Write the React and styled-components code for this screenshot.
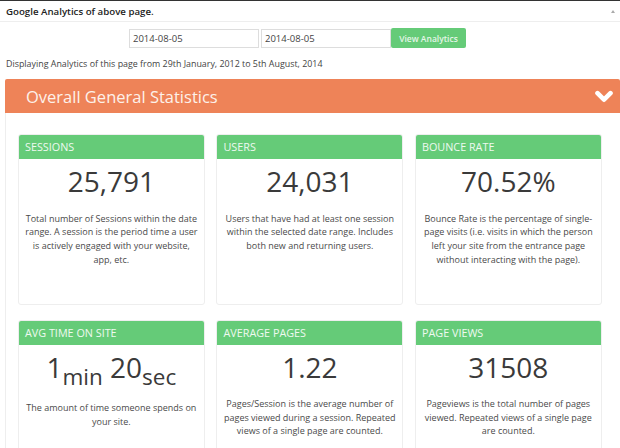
import React from "react";
import styled, { createGlobalStyle } from "styled-components";

const GlobalStyle = createGlobalStyle`
  html, body {
    margin: 0;
    padding: 0;
    width: 620px;
    height: 448px;
    overflow: hidden;
    background: #fff;
    font-family: "Open Sans", "Liberation Sans", sans-serif;
    color: #444;
  }
  * {
    box-sizing: border-box;
  }
`;

const stats = [
  {
    title: "SESSIONS",
    value: "25,791",
    text: "Total number of Sessions within the date range. A session is the period time a user is actively engaged with your website, app, etc.",
  },
  {
    title: "USERS",
    value: "24,031",
    text: "Users that have had at least one session within the selected date range. Includes both new and returning users.",
  },
  {
    title: "BOUNCE RATE",
    value: "70.52%",
    text: "Bounce Rate is the percentage of single-page visits (i.e. visits in which the person left your site from the entrance page without interacting with the page).",
  },
  {
    title: "AVG TIME ON SITE",
    time: true,
    text: "The amount of time someone spends on your site.",
  },
  {
    title: "AVERAGE PAGES",
    value: "1.22",
    text: "Pages/Session is the average number of pages viewed during a session. Repeated views of a single page are counted.",
  },
  {
    title: "PAGE VIEWS",
    value: "31508",
    text: "Pageviews is the total number of pages viewed. Repeated views of a single page are counted.",
  },
];

const App = () => {
  return (
    <Page>
      <GlobalStyle />
      <TitleBar>
        <h3>Google Analytics of above page.</h3>
        <Arrow />
      </TitleBar>
      <DateForm onSubmit={(e) => e.preventDefault()}>
        <DateInput type="text" defaultValue="2014-08-05" />
        <DateInput type="text" defaultValue="2014-08-05" />
        <ViewButton type="button">View Analytics</ViewButton>
      </DateForm>
      <Range>Displaying Analytics of this page from 29th January, 2012 to 5th August, 2014</Range>
      <Section>
        <SectionHead>
          <h2>Overall General Statistics</h2>
          <svg width="18" height="13" viewBox="0 0 18 13">
            <path d="M2.5 3.2 L9 9.7 L15.5 3.2" fill="none" stroke="#fff" strokeWidth="4.6" strokeLinecap="round" strokeLinejoin="round" />
          </svg>
        </SectionHead>
        <SectionBody>
          {stats.map((item) => {
            return (
              <Card key={item.title}>
                <CardHead>{item.title}</CardHead>
                <Value $tall={item.time}>
                  {item.time ? (
                    <>
                      1<Unit>min</Unit> 20<Unit>sec</Unit>
                    </>
                  ) : (
                    item.value
                  )}
                </Value>
                <Description>{item.text}</Description>
              </Card>
            );
          })}
        </SectionBody>
      </Section>
    </Page>
  );
};

const Page = styled.div`
  width: 620px;
  height: 448px;
  overflow: hidden;
  border-top: 1px solid #333;
`;

const TitleBar = styled.div`
  height: 21px;
  padding: 0 5px 0 6px;
  display: flex;
  align-items: center;
  justify-content: space-between;
  border-bottom: 1px solid #eee;
  h3 {
    margin: 0;
    font-size: 9.7px;
    font-weight: 600;
    color: #222;
  }
`;

const Arrow = styled.span`
  width: 0;
  height: 0;
  border-left: 2px solid transparent;
  border-right: 2px solid transparent;
  border-bottom: 3px solid #aaa;
`;

const DateForm = styled.form`
  margin: 6px 0 0 129px;
  height: 20px;
  display: flex;
  align-items: center;
`;

const DateInput = styled.input`
  width: 130px;
  height: 19px;
  margin-right: 2px;
  padding: 0 3px;
  border: 1px solid #ddd;
  font-family: inherit;
  font-size: 9.5px;
  color: #444;
  background: #fff;
  outline: none;
`;

const ViewButton = styled.button`
  width: 75px;
  height: 20px;
  margin-left: -2px;
  padding: 0;
  border: none;
  border-radius: 2px;
  background: #65cb78;
  color: #e4f6e7;
  font-family: inherit;
  font-size: 8.5px;
  font-weight: 600;
`;

const Range = styled.p`
  margin: 9px 0 0 6px;
  height: 13px;
  font-size: 8.9px;
  line-height: 13px;
  color: #444;
`;

const Section = styled.section`
  margin: 9px 0 0 5px;
`;

const SectionHead = styled.div`
  height: 34px;
  padding: 0 7px 0 21px;
  display: flex;
  align-items: center;
  justify-content: space-between;
  background: #ee8358;
  border-radius: 2px 2px 0 0;
  h2 {
    margin: 0;
    font-size: 16.5px;
    font-weight: 500;
    color: #fdf1ea;
  }
`;

const SectionBody = styled.div`
  padding: 21px 18px 0 12px;
  display: grid;
  grid-template-columns: repeat(3, 186.7px);
  grid-auto-rows: 170.5px;
  column-gap: 11.8px;
  row-gap: 15px;
  border-left: 1px solid #eee;
`;

const Card = styled.div`
  border: 1px solid #eee;
  border-radius: 3px;
  background: #fff;
  overflow: hidden;
`;

const CardHead = styled.div`
  height: 25px;
  margin: -1px -1px 0;
  padding: 0 7px;
  display: flex;
  align-items: center;
  background: #65cb78;
  color: #eef9f0;
  font-size: 10.8px;
  font-weight: 500;
`;

const Value = styled.div`
  margin-top: 2px;
  height: ${(props) => (props.$tall ? "44px" : "40px")};
  font-size: 28px;
  line-height: 40px;
  text-align: center;
  color: #3a3a3a;
`;

const Unit = styled.sub`
  font-size: 22.5px;
  line-height: 0;
  vertical-align: -7px;
`;

const Description = styled.p`
  margin: 10.5px 0 0;
  padding: 0 6px;
  font-size: 9px;
  line-height: 13.7px;
  text-align: center;
  color: #4a4a4a;
`;

export default App;
